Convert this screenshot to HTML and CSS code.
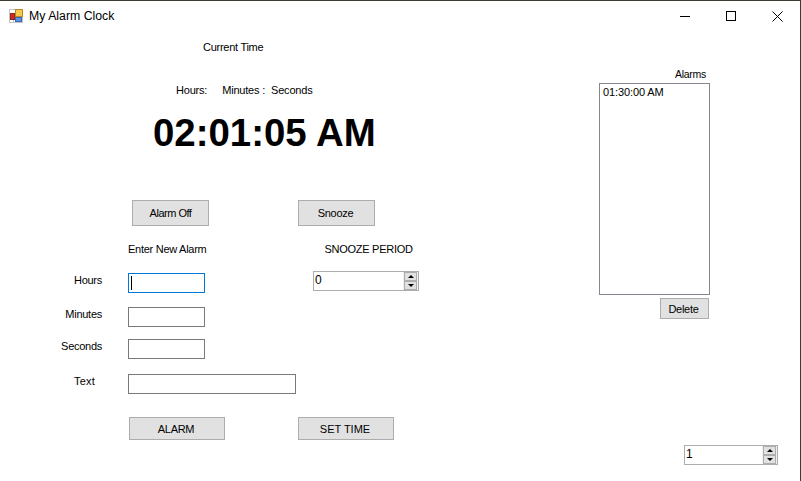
FILE: index.html
```html
<!DOCTYPE html>
<html lang="en">
<head>
<meta charset="UTF-8" />
<title>My Alarm Clock</title>
<link rel="stylesheet" href="styles.css">
</head>
<body>
<div class="window">
  <header class="titlebar">
    <svg class="app-icon" width="14" height="14" viewBox="0 0 14 14">
      <rect x="0" y="0" width="14" height="14" fill="#c4c4c4"/>
      <rect x="1" y="1" width="5" height="3" fill="#fff"/>
      <rect x="1" y="11" width="3" height="2" fill="#fff"/>
      <rect x="5" y="11" width="1" height="2" fill="#fff"/>
      <rect x="6.5" y=".5" width="7" height="7" fill="#f6c94a" stroke="#b98a20"/>
      <rect x="1.5" y="4.5" width="4" height="6" fill="#d9261c" stroke="#8c2a20"/>
      <rect x="6.5" y="8.5" width="6" height="4" fill="#5b94e6" stroke="#3a68b8"/>
    </svg>
    <span class="title">My Alarm Clock</span>
    <div class="caption-buttons">
      <span class="caption-btn"><svg width="11" height="11" viewBox="0 0 11 11"><path d="M0 5.5H10" stroke="#000" fill="none"/></svg></span>
      <span class="caption-btn"><svg width="11" height="11" viewBox="0 0 11 11"><rect x=".5" y=".5" width="9" height="9" stroke="#000" fill="none"/></svg></span>
      <span class="caption-btn"><svg width="11" height="11" viewBox="0 0 11 11"><path d="M.5 .5L10.5 10.5M10.5 .5L.5 10.5" stroke="#000" fill="none"/></svg></span>
    </div>
  </header>

  <main class="form">
    <section class="left">
      <div class="current-time">Current Time</div>
      <div class="time-heads"><span>Hours:</span><span>Minutes :</span><span>Seconds</span></div>
      <div class="clock">02:01:05 AM</div>

      <div class="button-row top-buttons">
        <button class="btn btn-off">Alarm Off</button>
        <button class="btn btn-snooze">Snooze</button>
      </div>

      <div class="heading-row">
        <span class="new-alarm">Enter New Alarm</span>
        <span class="snooze-period">SNOOZE PERIOD</span>
      </div>

      <div class="field-row hours-row">
        <label class="field-label">Hours</label>
        <div class="textbox focused"><span class="caret"></span></div>
        <div class="spin snooze-spin">
          <span class="spin-value">0</span>
          <div class="spin-arrows"><span class="up"></span><span class="down"></span></div>
        </div>
      </div>
      <div class="field-row minutes-row">
        <label class="field-label">Minutes</label>
        <div class="textbox"></div>
      </div>
      <div class="field-row seconds-row">
        <label class="field-label">Seconds</label>
        <div class="textbox"></div>
      </div>
      <div class="field-row text-row">
        <label class="field-label text-label">Text</label>
        <div class="textbox wide"></div>
      </div>

      <div class="button-row bottom-buttons">
        <button class="btn btn-alarm">ALARM</button>
        <button class="btn btn-set">SET TIME</button>
      </div>
    </section>

    <aside class="right">
      <div class="alarms-label">Alarms</div>
      <div class="listbox">01:30:00 AM</div>
      <button class="btn btn-delete">Delete</button>
      <div class="spin bottom-spin">
        <span class="spin-value">1</span>
        <div class="spin-arrows"><span class="up"></span><span class="down"></span></div>
      </div>
    </aside>
  </main>
</div>
</body>
</html>
```

FILE: styles.css
```css
* {
  box-sizing: border-box;
}
html, body {
  margin: 0;
  height: 100%;
  overflow: hidden;
}
body {
  font-family: "Liberation Sans", Arial, sans-serif;
  font-size: 11px;
  letter-spacing: -0.27px;
  color: #000;
  background: #3c3c34;
}
.window {
  width: 800px;
  height: 481px;
  margin-top: 1px;
  background: #fff;
}

/* title bar */
.titlebar {
  display: flex;
  align-items: center;
  height: 30px;
  padding-left: 9px;
}
.app-icon {
  margin-bottom: 1px;
}
.title {
  margin-left: 6px;
  font-size: 12.3px;
  letter-spacing: 0;
}
.caption-buttons {
  display: flex;
  margin-left: auto;
}
.caption-btn {
  display: flex;
  align-items: center;
  justify-content: center;
  width: 46px;
  height: 30px;
}

/* form */
.form {
  display: flex;
}
.left {
  width: 599px;
}
.current-time {
  margin: 9px 0 0 203px;
  line-height: 14px;
}
.time-heads {
  display: flex;
  margin: 29px 0 0 176px;
  line-height: 14px;
  letter-spacing: -0.2px;
}
.time-heads span:nth-child(2) {
  margin-left: 15px;
}
.time-heads span:nth-child(3) {
  margin-left: 6px;
}
.clock {
  margin: 14px 0 0 153px;
  font-size: 38.4px;
  font-weight: bold;
  letter-spacing: 0;
  line-height: 44px;
}

.btn {
  padding: 0;
  background: #e1e1e1;
  border: 1px solid #adadad;
  border-radius: 0;
  font-family: inherit;
  font-size: 11px;
  letter-spacing: -0.27px;
  color: #000;
}
.button-row {
  display: flex;
}
.top-buttons {
  margin-top: 45px;
  padding-left: 132px;
}
.btn-off, .btn-snooze {
  width: 77px;
  height: 26px;
}
.btn-off {
  letter-spacing: -0.5px;
}
.btn-snooze {
  margin-left: 89px;
  padding-right: 2px;
}
.heading-row {
  display: flex;
  margin-top: 16px;
  padding-left: 128px;
  line-height: 14px;
}
.snooze-period {
  margin-left: 118px;
}

.field-row {
  display: flex;
  align-items: flex-start;
}
.field-label {
  width: 102px;
  text-align: right;
  line-height: 14px;
}
.text-label {
  padding-right: 7px;
  letter-spacing: 0.2px;
}
.textbox {
  display: flex;
  align-items: center;
  width: 77px;
  height: 20px;
  margin-left: 26px;
  border: 1px solid #7a7a7a;
  background: #fff;
}
.textbox.wide {
  width: 168px;
}
.textbox.focused {
  border-color: #0078d7;
}
.caret {
  width: 1px;
  height: 14px;
  margin-left: 2px;
  background: #000;
}
.hours-row {
  margin-top: 15px;
  height: 22px;
}
.hours-row .field-label {
  margin-top: 2px;
}
.hours-row .textbox {
  margin-top: 2px;
}
.minutes-row {
  margin-top: 14px;
}
.seconds-row {
  margin-top: 12px;
}
.text-row {
  margin-top: 15px;
}
.bottom-buttons {
  margin-top: 23px;
  padding-left: 129px;
}
.btn-alarm, .btn-set {
  width: 96px;
  height: 23px;
}
.btn-alarm {
  padding-right: 2px;
}
.btn-set {
  margin-left: 73px;
  letter-spacing: 0;
  padding-right: 2px;
}

/* numeric updown */
.spin {
  display: flex;
  align-items: stretch;
  height: 20px;
  padding-left: 1px;
  border: 1px solid #adadad;
  background: #fff;
}
.spin-value {
  flex: 1;
  line-height: 17px;
  font-size: 12px;
}
.spin-arrows {
  display: flex;
  flex-direction: column;
  width: 15px;
  padding: 0 1px 0 1px;
  background: #f0f0f0;
}
.spin-arrows span {
  flex: 1;
  display: flex;
  align-items: center;
  justify-content: center;
  background: #e1e1e1;
  border: 1px solid #adadad;
}
.up::before {
  content: "";
  border: 3px solid transparent;
  border-top: 0;
  border-bottom: 3px solid #000;
}
.down::before {
  content: "";
  border: 3px solid transparent;
  border-bottom: 0;
  border-top: 3px solid #000;
}
.snooze-spin {
  width: 106px;
  margin-left: 108px;
}

/* right side */
.right {
  display: flex;
  flex-direction: column;
  width: 201px;
}
.alarms-label {
  margin: 36px 0 0 76px;
  line-height: 14px;
  font-size: 10.5px;
}
.listbox {
  width: 111px;
  height: 212px;
  margin-top: 2px;
  padding: 1px 3px;
  border: 1px solid #828790;
  line-height: 14px;
  letter-spacing: -0.1px;
}
.btn-delete {
  width: 49px;
  height: 21px;
  margin: 3px 0 0 61px;
  padding-right: 2px;
}
.bottom-spin {
  width: 94px;
  margin: 126px 0 0 85px;
}
```
